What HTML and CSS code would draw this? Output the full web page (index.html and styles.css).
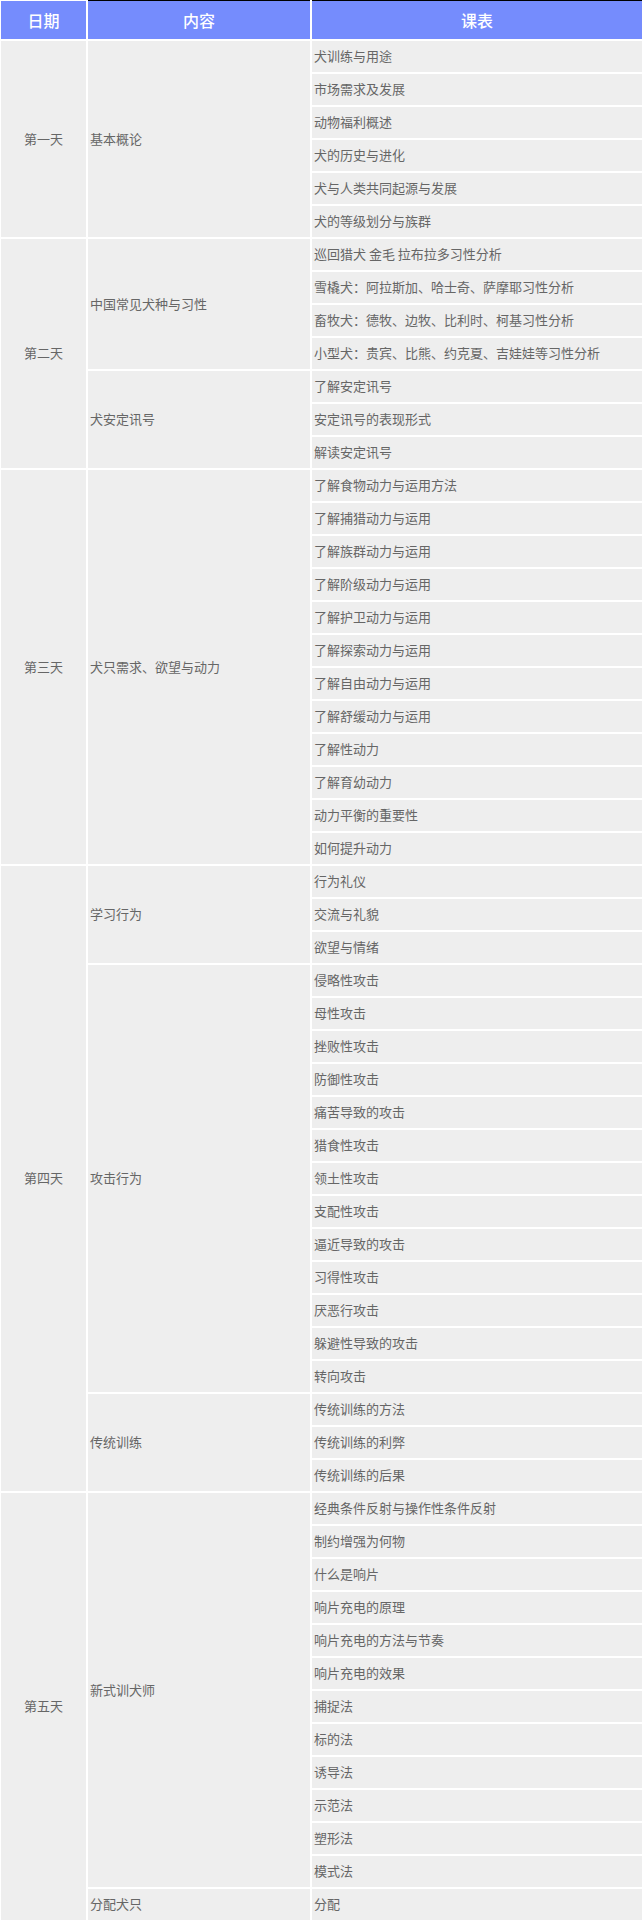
FILE: index.html
```html
<!DOCTYPE html>
<html lang="zh-CN">
<head>
<meta charset="utf-8">
<title>课表</title>
<link rel="stylesheet" href="styles.css">
</head>
<body>
<table class="schedule">
  <colgroup>
    <col class="c-day">
    <col class="c-topic">
    <col class="c-lesson">
  </colgroup>
  <thead>
    <tr>
      <th class="h-first">日期</th>
      <th>内容</th>
      <th>课表</th>
    </tr>
  </thead>
  <tbody>
    <tr><td class="day" rowspan="6">第一天</td><td class="topic" rowspan="6">基本概论</td><td>犬训练与用途</td></tr>
    <tr><td>市场需求及发展</td></tr>
    <tr><td>动物福利概述</td></tr>
    <tr><td>犬的历史与进化</td></tr>
    <tr><td>犬与人类共同起源与发展</td></tr>
    <tr><td>犬的等级划分与族群</td></tr>

    <tr><td class="day" rowspan="7">第二天</td><td class="topic" rowspan="4">中国常见犬种与习性</td><td>巡回猎犬 金毛 拉布拉多习性分析</td></tr>
    <tr><td>雪橇犬：阿拉斯加、哈士奇、萨摩耶习性分析</td></tr>
    <tr><td>畜牧犬：德牧、边牧、比利时、柯基习性分析</td></tr>
    <tr><td>小型犬：贵宾、比熊、约克夏、吉娃娃等习性分析</td></tr>
    <tr><td class="topic" rowspan="3">犬安定讯号</td><td>了解安定讯号</td></tr>
    <tr><td>安定讯号的表现形式</td></tr>
    <tr><td>解读安定讯号</td></tr>

    <tr><td class="day" rowspan="12">第三天</td><td class="topic" rowspan="12">犬只需求、欲望与动力</td><td>了解食物动力与运用方法</td></tr>
    <tr><td>了解捕猎动力与运用</td></tr>
    <tr><td>了解族群动力与运用</td></tr>
    <tr><td>了解阶级动力与运用</td></tr>
    <tr><td>了解护卫动力与运用</td></tr>
    <tr><td>了解探索动力与运用</td></tr>
    <tr><td>了解自由动力与运用</td></tr>
    <tr><td>了解舒缓动力与运用</td></tr>
    <tr><td>了解性动力</td></tr>
    <tr><td>了解育幼动力</td></tr>
    <tr><td>动力平衡的重要性</td></tr>
    <tr><td>如何提升动力</td></tr>

    <tr><td class="day" rowspan="19">第四天</td><td class="topic" rowspan="3">学习行为</td><td>行为礼仪</td></tr>
    <tr><td>交流与礼貌</td></tr>
    <tr><td>欲望与情绪</td></tr>
    <tr><td class="topic" rowspan="13">攻击行为</td><td>侵略性攻击</td></tr>
    <tr><td>母性攻击</td></tr>
    <tr><td>挫败性攻击</td></tr>
    <tr><td>防御性攻击</td></tr>
    <tr><td>痛苦导致的攻击</td></tr>
    <tr><td>猎食性攻击</td></tr>
    <tr><td>领土性攻击</td></tr>
    <tr><td>支配性攻击</td></tr>
    <tr><td>逼近导致的攻击</td></tr>
    <tr><td>习得性攻击</td></tr>
    <tr><td>厌恶行攻击</td></tr>
    <tr><td>躲避性导致的攻击</td></tr>
    <tr><td>转向攻击</td></tr>
    <tr><td class="topic" rowspan="3">传统训练</td><td>传统训练的方法</td></tr>
    <tr><td>传统训练的利弊</td></tr>
    <tr><td>传统训练的后果</td></tr>

    <tr><td class="day" rowspan="13">第五天</td><td class="topic" rowspan="12">新式训犬师</td><td>经典条件反射与操作性条件反射</td></tr>
    <tr><td>制约增强为何物</td></tr>
    <tr><td>什么是响片</td></tr>
    <tr><td>响片充电的原理</td></tr>
    <tr><td>响片充电的方法与节奏</td></tr>
    <tr><td>响片充电的效果</td></tr>
    <tr><td>捕捉法</td></tr>
    <tr><td>标的法</td></tr>
    <tr><td>诱导法</td></tr>
    <tr><td>示范法</td></tr>
    <tr><td>塑形法</td></tr>
    <tr><td>模式法</td></tr>
    <tr><td class="topic">分配犬只</td><td>分配</td></tr>
  </tbody>
</table>
</body>
</html>
```

FILE: styles.css
```css
html, body {
  margin: 0;
  padding: 0;
  background: #ffffff;
}

body {
  font-family: "Noto Sans CJK SC", "Microsoft YaHei", sans-serif;
}

.schedule {
  border-collapse: separate;
  border-spacing: 2px;
  margin: -2px 0 0 -1px;
  table-layout: fixed;
  width: 645px;
}

.c-day { width: 85px; }
.c-topic { width: 222px; }
.c-lesson { width: 330px; }

.schedule th {
  background: #758cfd;
  color: #ffffff;
  font-size: 16px;
  font-weight: 500;
  height: 38px;
  padding: 0;
  text-align: center;
  vertical-align: middle;
  border-top: 1px solid #000000;
  line-height: 38px;
}

.schedule th.h-first {
  border-top-color: #ffffff;
}

.schedule td {
  background: #eeeeee;
  color: #666666;
  font-size: 13px;
  height: 31px;
  padding: 0 2px 2px;
  line-height: 29px;
  text-align: left;
  vertical-align: middle;
  white-space: nowrap;
  box-sizing: border-box;
}

.schedule td.day {
  text-align: center;
}
```
